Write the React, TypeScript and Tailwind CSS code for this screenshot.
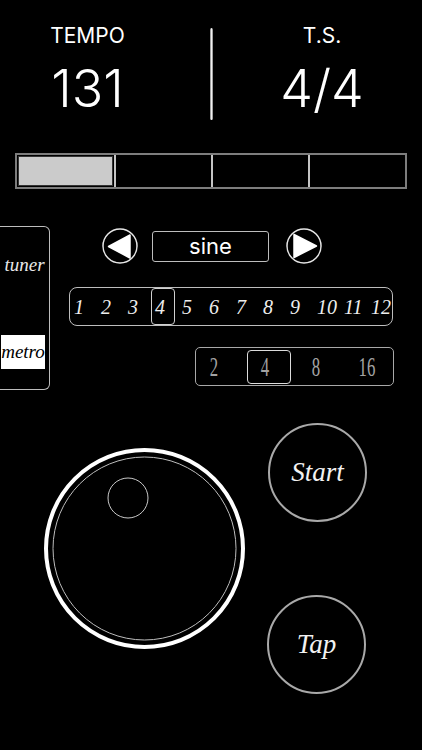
import React from 'react';

const SERIF = "font-['Liberation_Serif',serif]";
const SANS = "font-['Inter','Liberation_Sans',sans-serif]";

const beats = [1, 2, 3, 4, 5, 6, 7, 8, 9, 10, 11, 12];
const subdivisions = [2, 4, 8, 16];

function ArrowButton({ dir }: { dir: 'left' | 'right' }) {
  return (
    <svg width="36" height="36" viewBox="0 0 36 36">
      <circle cx="18" cy="18" r="17" fill="none" stroke="#e6e6e6" strokeWidth="1.5" />
      {dir === 'left' ? (
        <polygon points="6.5,18.5 28,7 28,30" fill="#fff" stroke="#fff" strokeWidth="1.5" strokeLinejoin="round" />
      ) : (
        <polygon points="30.5,18 8,6.5 8,29.5" fill="#fff" stroke="#fff" strokeWidth="1.5" strokeLinejoin="round" />
      )}
    </svg>
  );
}

function Knob() {
  return (
    <svg width="205" height="205" viewBox="0 0 205 205">
      <circle cx="102.5" cy="102.5" r="98.5" fill="none" stroke="#fff" strokeWidth="4" />
      <circle cx="102.5" cy="102.5" r="91.5" fill="none" stroke="#bdbdbd" strokeWidth="1" />
      <circle cx="86" cy="52" r="20" fill="none" stroke="#c8c8c8" strokeWidth="1" />
    </svg>
  );
}

export default function App() {
  return (
    <div className={`w-[422px] h-[750px] overflow-hidden bg-black text-white ${SANS}`}>
      {/* Header: tempo / time signature */}
      <div className="flex items-start pt-[28px] h-[153px]">
        <div className="w-[175px] flex flex-col items-center">
          <span className="text-[21px] leading-none -mt-[3px]">TEMPO</span>
          <span className="text-[52px] font-light leading-none mt-[17px]">131</span>
        </div>
        <div className="ml-[35px] w-[3px] h-[92px] rounded-full bg-linear-to-r from-[#7a7a7a] via-[#f0f0f0] to-[#7a7a7a]" />
        <div className="ml-[23px] w-[172px] flex flex-col items-center">
          <span className="text-[21px] leading-none -mt-[3px]">T.S.</span>
          <span className="text-[52px] font-light leading-none mt-[17px]">4/4</span>
        </div>
      </div>

      {/* Beat indicator */}
      <div className="ml-[15px] flex h-[36px] w-[392px] border-2 border-[#7d7d7d]">
        <div className="flex-1 p-[1px]">
          <div className="h-full bg-[#cbcbcb] border border-[#333]" />
        </div>
        <div className="flex-1 border-l-2 border-[#c4c4c4]" />
        <div className="flex-1 border-l-2 border-[#c4c4c4]" />
        <div className="flex-1 border-l-2 border-[#c4c4c4]" />
      </div>

      {/* Middle controls */}
      <div className="mt-[37px] flex">
        <div className="w-[50px] h-[164px] border-[1.5px] border-l-0 border-[#bdbdbd] rounded-r-[6px] flex flex-col">
          <span className={`mt-[28px] text-center italic text-[19px] leading-none text-[#e8e8e8] ${SERIF}`}>tuner</span>
          <div className={`mt-[61px] ml-[1px] w-[44px] h-[34px] bg-white flex items-center justify-center italic text-[19px] text-black ${SERIF}`}>
            metro
          </div>
        </div>

        <div className="flex flex-col pt-[2px]">
          <div className="ml-[52px] flex items-center h-[36px]">
            <ArrowButton dir="left" />
            <div className="ml-[14px] w-[117px] h-[31px] border-[1.5px] border-[#bdbdbd] rounded-[3px] flex items-center justify-center text-[22px] leading-none">
              sine
            </div>
            <div className="ml-[17px]">
              <ArrowButton dir="right" />
            </div>
          </div>

          <div className="ml-[19px] mt-[23px] w-[324px] h-[39px] border-[1.5px] border-[#bdbdbd] rounded-[8px] flex gap-[3px]">
            {beats.map((b) => (
              <div
                key={b}
                className={
                  b === 4
                    ? `w-[24px] h-full border-[1.5px] border-[#d0d0d0] rounded-[4px] flex items-center pl-[3px] italic text-[20px] text-[#eee] ${SERIF}`
                    : `w-[24px] h-full border-[1.5px] border-transparent flex items-center pl-[3px] italic text-[20px] text-[#eee] ${SERIF}`
                }
              >
                {b}
              </div>
            ))}
          </div>

          <div className="ml-[145px] mt-[21px] w-[199px] h-[39px] border-[1.5px] border-[#a8a8a8] rounded-[5px] flex gap-[6.5px] py-[1.5px]">
            {subdivisions.map((s) => (
              <div
                key={s}
                className={
                  s === 4
                    ? 'w-[45px] h-full border-[1.5px] border-[#dcdcdc] rounded-[4px] flex items-center justify-center pr-[8px]'
                    : 'w-[45px] h-full border-[1.5px] border-transparent flex items-center justify-center pr-[8px]'
                }
              >
                <span className={`inline-block scale-x-[0.6] text-[28px] leading-none text-[#a3a3a3] ${SERIF}`}>{s}</span>
              </div>
            ))}
          </div>
        </div>
      </div>

      {/* Knob + Start / Tap */}
      <div className="mt-[33px] flex items-start">
        <div className="ml-[42px] mt-[23px]">
          <Knob />
        </div>
        <div className="ml-[21px] flex flex-col">
          <button className={`w-[99px] h-[99px] rounded-full border-2 border-[#a9a9a9] flex items-center justify-center italic text-[27px] text-[#f2f2f2] ${SERIF}`}>
            Start
          </button>
          <button className={`-ml-[1px] mt-[73px] w-[99px] h-[99px] rounded-full border-2 border-[#a9a9a9] flex items-center justify-center italic text-[27px] text-[#f2f2f2] ${SERIF}`}>
            Tap
          </button>
        </div>
      </div>
    </div>
  );
}
